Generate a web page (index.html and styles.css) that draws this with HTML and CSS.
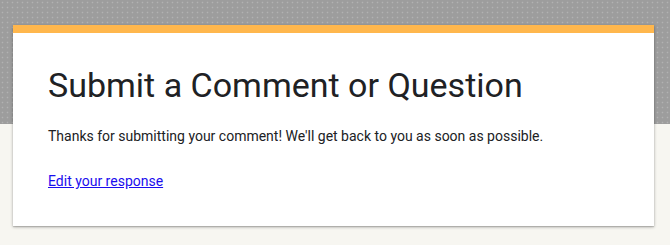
FILE: index.html
```html
<!DOCTYPE html>
<html>
<head>
<meta charset="utf-8">
<link rel="stylesheet" href="styles.css">
</head>
<body>
<div class="page">
  <div class="band"></div>
  <div class="card">
    <h1 class="title">Submit a Comment or Question</h1>
    <p class="msg">Thanks for submitting your comment! We'll get back to you as soon as possible.</p>
    <a class="edit" href="#">Edit your response</a>
  </div>
</div>
</body>
</html>
```
FILE: styles.css
```css
html, body {
  margin: 0;
  padding: 0;
}
body {
  width: 670px;
  height: 245px;
  overflow: hidden;
  background: #f7f6f1;
  font-family: Roboto, "Liberation Sans", sans-serif;
}
.page {
  position: relative;
  width: 670px;
  height: 245px;
  padding-top: 25px;
  box-sizing: border-box;
}
.band {
  position: absolute;
  left: 0;
  top: 0;
  width: 670px;
  height: 124px;
  background-color: #9d9d9d;
  background-image: radial-gradient(circle, rgba(200,200,200,0.5) 0.7px, transparent 1.1px);
  background-size: 5px 5px;
}
.card {
  position: relative;
  margin-left: 13px;
  width: 641px;
  box-sizing: border-box;
  background: #ffffff;
  border-top: 8px solid #ffb74d;
  padding: 31px 35px 35px 35px;
  box-shadow: 0 1px 3px rgba(0,0,0,0.3), 0 1px 1px rgba(0,0,0,0.12);
}
.title {
  margin: 0;
  font-size: 34px;
  line-height: 42px;
  font-weight: 400;
  color: #202124;
}
.msg {
  margin: 20px 0 0 0;
  font-size: 14px;
  line-height: 20px;
  color: #202124;
}
.edit {
  display: block;
  margin-top: 25px;
  font-size: 14px;
  line-height: 20px;
  color: #1a0dee;
  text-decoration: underline;
}
```
